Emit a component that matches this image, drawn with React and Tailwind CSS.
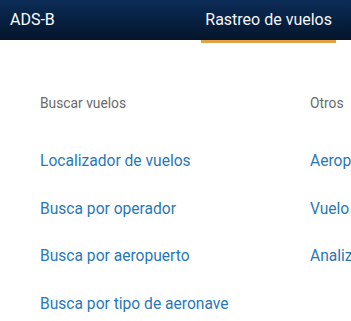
const buscar = [
  "Localizador de vuelos",
  "Busca por operador",
  "Busca por aeropuerto",
  "Busca por tipo de aeronave",
];

const otros = ["Aeropuertos", "Vuelo en vivo", "Analizador"];

export default function App() {
  return (
    <div
      className="w-[351px] h-[321px] overflow-hidden bg-white"
      style={{ fontFamily: "Roboto, 'Noto Sans', sans-serif" }}
    >
      <header className="h-[40px] flex items-center bg-gradient-to-b from-[#0c2c58] to-[#04152b] text-white text-[16px]">
        <span className="pl-[10px]">ADS-B</span>
        <div className="relative ml-auto mr-[15px] h-full flex items-center px-[4px]">
          <span className="text-[#f3f6fa]">Rastreo de vuelos</span>
          <span className="absolute left-0 right-0 top-full h-[3px] bg-[#e2a344]" />
        </div>
      </header>

      <div className="flex pt-[53px] pl-[40px] whitespace-nowrap">
        <div className="w-[270px] shrink-0">
          <h3 className="text-[13.8px] leading-[20px] text-[#6a6a6a]">Buscar vuelos</h3>
          <ul className="mt-[38px] flex flex-col gap-[27.5px]">
            {buscar.map((t) => (
              <li key={t} className="text-[15.6px] leading-[20px] text-[#2878b8]">
                {t}
              </li>
            ))}
          </ul>
        </div>
        <div className="shrink-0">
          <h3 className="text-[13.8px] leading-[20px] text-[#6a6a6a]">Otros</h3>
          <ul className="mt-[38px] flex flex-col gap-[27.5px]">
            {otros.map((t) => (
              <li key={t} className="text-[15.6px] leading-[20px] text-[#2878b8]">
                {t}
              </li>
            ))}
          </ul>
        </div>
      </div>
    </div>
  );
}
